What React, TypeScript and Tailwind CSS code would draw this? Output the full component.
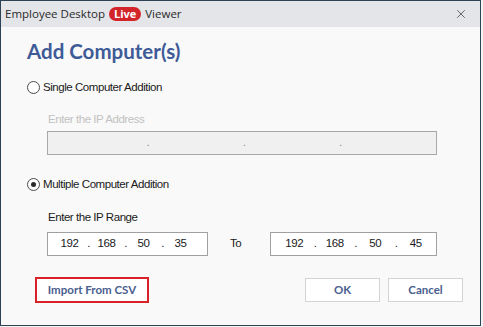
import { X } from 'lucide-react';

const narrow = "font-['Liberation_Sans',Arial,sans-serif] text-[11.5px] tracking-[-0.45px]";

function IpBox({ parts, disabled, width, seg }: { parts: string[]; disabled?: boolean; width: string; seg: string }) {
  return (
    <div
      className={`flex h-[24px] items-center border pl-[3px] ${width} ${
        disabled ? 'border-[#a8a8a8] bg-[#f0f0f0]' : 'border-[#a0a0a0] bg-white'
      } ${narrow} text-[#1a1a1a]`}
    >
      {parts.map((part, i) => (
        <div key={i} className={`relative flex items-center justify-center ${seg}`}>
          <span>{part}</span>
          {i < parts.length - 1 ? (
            <span className={`absolute right-[-2px] ${disabled ? 'text-[#8a8a8a]' : ''}`}>.</span>
          ) : null}
        </div>
      ))}
    </div>
  );
}

function Radio({ checked, label }: { checked?: boolean; label: string }) {
  return (
    <label className={`flex items-center gap-[3px] ${narrow} text-[#1a1a1a]`}>
      <span className="flex h-[13px] w-[13px] items-center justify-center rounded-full border border-[#4a4a4a] bg-white">
        {checked ? <span className="h-[5px] w-[5px] rounded-full bg-[#2a2a2a]" /> : null}
      </span>
      {label}
    </label>
  );
}

export default function App() {
  return (
    <div className="h-[327px] w-[483px] bg-[#f4f4f4]">
      <div className="flex h-[326px] w-[481px] flex-col border border-[#2e4256] bg-[#f9f9f9]">
        <div className="flex h-[26px] items-center justify-between bg-[#e3e5e8] pl-[4px] pr-[12px] font-['Open_Sans',sans-serif] text-[11.5px] text-[#2a2a2a]">
          <div className="flex items-center gap-[4px]">
            <span>Employee Desktop</span>
            <span className="rounded-full bg-[#d3242a] px-[5px] text-[11px] leading-[14px] font-bold text-white">Live</span>
            <span>Viewer</span>
          </div>
          <X size={14} strokeWidth={1.5} className="text-[#555]" />
        </div>

        <div className="flex flex-1 flex-col pl-[26px] pr-[43px]">
          <h1 className="mt-[11px] font-['Lato',sans-serif] text-[20.5px] leading-[26px] font-bold text-[#3e5b98]">
            Add Computer(s)
          </h1>

          <div className="mt-[15px]">
            <Radio label="Single Computer Addition" />
          </div>
          <p className={`mt-[15px] pl-[21px] ${narrow} text-[#c2c2c2]`}>Enter the IP Address</p>
          <div className="mt-[2px] pl-[20px]">
            <IpBox parts={['', '', '', '']} disabled width="w-[390px]" seg="w-[97px]" />
          </div>

          <div className="mt-[21px]">
            <Radio checked label="Multiple Computer Addition" />
          </div>
          <p className={`mt-[16px] pl-[21px] ${narrow} text-[#1a1a1a]`}>Enter the IP Range</p>
          <div className="mt-[6px] flex items-center pl-[20px]">
            <IpBox parts={['192', '168', '50', '35']} width="w-[161px]" seg="w-[37px]" />
            <span className={`ml-[22px] ${narrow} text-[#1a1a1a]`}>To</span>
            <div className="ml-auto">
              <IpBox parts={['192', '168', '50', '45']} width="w-[167px]" seg="w-[41px]" />
            </div>
          </div>

          <div className="mt-[21px] flex items-center font-['Lato',sans-serif] text-[11.5px] font-bold text-[#4a5e8e]">
            <button type="button" className="ml-[8px] h-[26px] w-[114px] border-2 border-[#d9212a] bg-white">
              Import From CSV
            </button>
            <button type="button" className="ml-auto h-[24px] w-[75px] border border-[#d4d4d4] bg-white">
              OK
            </button>
            <button type="button" className="ml-[8px] mr-[-26px] h-[24px] w-[75px] border border-[#d4d4d4] bg-white">
              Cancel
            </button>
          </div>
        </div>
      </div>
    </div>
  );
}
